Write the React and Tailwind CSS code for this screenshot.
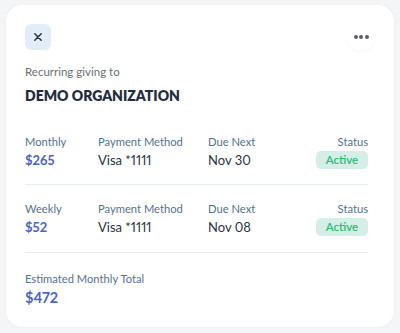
import React from "react";

const font = { fontFamily: "Lato, 'Open Sans', sans-serif" };

function Row({ freq, amount, due }) {
  return (
    <div className="grid grid-cols-[73px_110px_1fr_auto] mr-[7px]">
      <div>
        <div className="text-[11.2px] leading-[16px] text-[#557190]">{freq}</div>
        <div className="text-[13px] leading-[20px] font-bold text-[#4b64c4] proportional-nums">{amount}</div>
      </div>
      <div>
        <div className="text-[11.2px] leading-[16px] text-[#557190]">Payment Method</div>
        <div className="text-[13px] leading-[20px] text-[#2b3340] proportional-nums">Visa *1111</div>
      </div>
      <div>
        <div className="text-[11.2px] leading-[16px] text-[#557190]">Due Next</div>
        <div className="text-[13px] leading-[20px] text-[#2b3340] proportional-nums">{due}</div>
      </div>
      <div className="flex flex-col items-end">
        <div className="text-[11.2px] leading-[16px] text-[#557190]">Status</div>
        <div className="mt-[1px] h-[18px] w-[52px] rounded-[5px] bg-[#d3efe7] text-[#2dbb6e] text-[11.5px] font-semibold flex items-center justify-center">Active</div>
      </div>
    </div>
  );
}

export default function App() {
  return (
    <div className="w-[400px] h-[333px] bg-[#f4f5f6] pt-[5px] pl-[6px]" style={font}>
      <div className="w-[388px] h-[322px] rounded-[16px] bg-white shadow-[0_0_3px_rgba(0,0,0,0.05)] px-[19px] pt-[19px]">
        <div className="flex justify-between items-center h-[26px]">
          <button className="w-[26px] h-[26px] rounded-[6px] bg-[#e3edf7] flex items-center justify-center">
            <svg width="10" height="10" viewBox="0 0 10 10" fill="none" stroke="#2b3340" strokeWidth="1.5" strokeLinecap="round">
              <path d="M1.8 1.8 L8.2 8.2 M8.2 1.8 L1.8 8.2" />
            </svg>
          </button>
          <button className="w-[28px] h-[28px] rounded-full bg-white shadow-[0_1px_3px_rgba(0,0,0,0.035)] flex items-center justify-center gap-[1.5px]">
            <span className="w-[4px] h-[4px] rounded-full bg-[#5a5f66]" />
            <span className="w-[4px] h-[4px] rounded-full bg-[#5a5f66]" />
            <span className="w-[4px] h-[4px] rounded-full bg-[#5a5f66]" />
          </button>
        </div>
        <div className="mt-[14px] text-[11.5px] leading-[16px] text-[#6b6f75]">Recurring giving to</div>
        <div className="mt-[6px] text-[14px] leading-[20px] font-extrabold text-[#1f2d3f]">DEMO ORGANIZATION</div>
        <div className="mt-[28px]">
          <Row freq="Monthly" amount="$265" due="Nov 30" />
        </div>
        <div className="mt-[14px] mr-[7px] h-px bg-[#e3ecf5]" />
        <div className="mt-[16px]">
          <Row freq="Weekly" amount="$52" due="Nov 08" />
        </div>
        <div className="mt-[15px] mr-[7px] h-px bg-[#e3ecf5]" />
        <div className="mt-[18px] text-[11.2px] leading-[16px] text-[#557190]">Estimated Monthly Total</div>
        <div className="text-[14.5px] leading-[22px] font-bold text-[#4b64c4] proportional-nums">$472</div>
      </div>
    </div>
  );
}
